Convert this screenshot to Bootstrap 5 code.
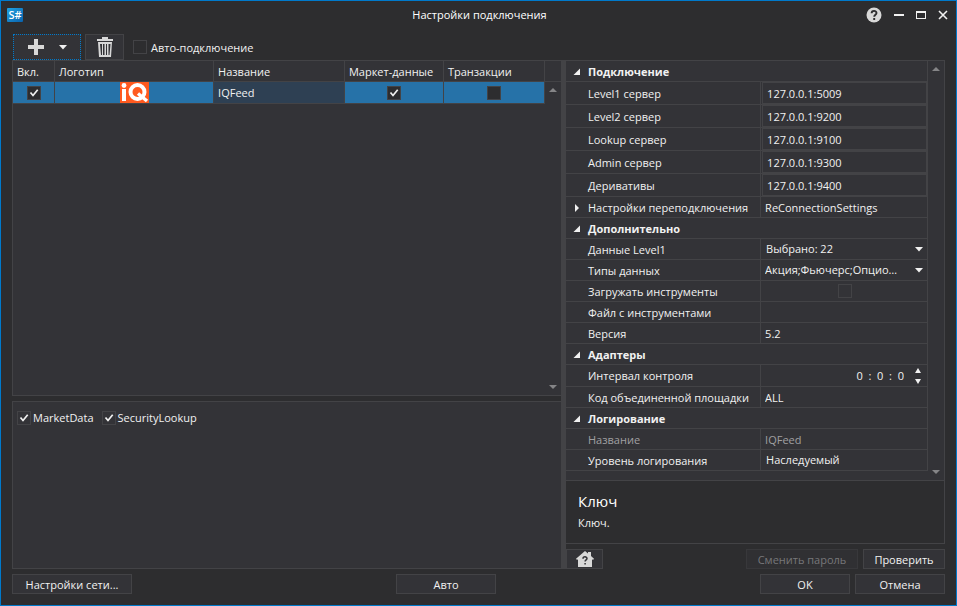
<!DOCTYPE html>
<html lang="ru" data-bs-theme="dark">
<head>
<meta charset="utf-8">
<meta name="viewport" content="width=device-width, initial-scale=1">
<title>Настройки подключения</title>
<link href="https://cdn.jsdelivr.net/npm/bootstrap@5.3.0/dist/css/bootstrap.min.css" rel="stylesheet">
<style>
:root{--win:#2d2d2f;--pane:#333337;--line:#434346;--ink:#f1f1f1;--accent:#007acc;--sel:#2672a8}
body{font-family:"Open Sans","Noto Sans",sans-serif;font-size:11px;line-height:16px;color:var(--ink);background:var(--win)}
.app-window{border:1px solid var(--accent);min-height:100vh;height:100vh}
.title-bar{height:27px;padding:0 8px 0 6px;display:grid;grid-template-columns:1fr auto 1fr}
.title-bar h1{font-size:11px;line-height:16px;font-weight:400;padding-left:4px}
.plain-btn{background:none;border:0;padding:0;color:inherit;display:flex;align-items:center;justify-content:center}
.win-btns{gap:12px}
.tool-bar{height:32px;padding:6px 12px 0;gap:4px}
.tool-btn,.cmd-btn{background:var(--pane);border:1px solid var(--line);color:var(--ink);border-radius:0;padding:0}
.tool-btn{height:26px;width:39px;display:flex;align-items:center;justify-content:center}
.add-btn{width:68px;border:1px dotted var(--accent);gap:15px}
.auto-label{gap:4px;padding-left:5px}
.auto-label span{padding-top:2px}
.cmd-btn{height:20px;line-height:16px;padding-top:2px;font-size:11px}
.cmd-btn:disabled{color:#77777a;border-color:#38383b;background:#303033}
.w-net{width:120px}.w-auto-btn{width:100px}.w-dlg{width:90px}.w-check{width:82px}.w-pass{width:112px}.w-home{width:37px;padding:0}
.tick{appearance:none;width:14px;height:14px;margin:0;border:1px solid var(--line);background:var(--win) center/12px 12px no-repeat;flex:none;display:block}
.tick-pane{background-color:var(--pane)}
.tick:checked{background-image:url("data:image/svg+xml,%3Csvg xmlns='http://www.w3.org/2000/svg' viewBox='0 0 12 12'%3E%3Cpath d='M2.500 5.500 5 8.500 9.700 2.700' fill='none' stroke='%23f1f1f1' stroke-width='1.700'/%3E%3C/svg%3E")}
.flags{gap:8px;padding:8px 4px}
.flags label{gap:2px}
.work-area{display:grid;grid-template-columns:minmax(0,549fr) 5px minmax(0,379fr);padding:0 11px}
.splitter{background:var(--line)}
.pane{background:var(--pane);border:1px solid var(--line)}
.left-col{display:grid;grid-template-rows:minmax(0,2fr) minmax(0,1fr);gap:5px}
.grid-pane{border-right:0}
table{width:100%;table-layout:fixed;border-collapse:separate;border-spacing:0}
th,td{font-weight:400;padding:1px 0 0;border-right:1px solid var(--line);border-bottom:1px solid var(--line);white-space:nowrap;overflow:hidden}
.conn-table th{height:21px;padding-left:4px}
.conn-table td{height:22px;background:var(--sel);padding:0}
.conn-table td.focused{background:#2e4053;padding-left:4px}
.conn-table td .tick{margin:0 auto}
.scroll-col{width:16px;flex:none}
.scroll-col .head{height:21px;border-bottom:1px solid var(--line);flex:none}
.prop-pane{border-left:0}
.prop-table td,.prop-table th{height:21px}
.prop-table .tall>*{height:23px}
.prop-table .mid>*{height:22px}
.prop-table th[scope=row],.prop-table .group-head{padding-left:22px}
.prop-table td{padding-left:4px}
.prop-table .edit-cell{padding:0 0 0 1px}
.group-head{font-weight:700}
.has-toggle{padding-left:6px!important}
.toggle{width:10px;height:10px;margin-right:6px}
.field{display:block;width:100%;background:var(--pane);border:0;border-radius:0;color:var(--ink);padding:0 4px;height:20px;font-size:11px;line-height:16px;appearance:none}
.boxed{border:1px solid var(--line);height:22px}
.pick{background:var(--pane) right 4px center/8px 5px no-repeat url("data:image/svg+xml,%3Csvg xmlns='http://www.w3.org/2000/svg' viewBox='0 0 8 5'%3E%3Cpath d='M0 0h8L4 4.5z' fill='%23f1f1f1'/%3E%3C/svg%3E");padding-right:24px;text-overflow:ellipsis}
.pick-plain{background-image:none}
.field-flush{padding-left:3px}
.spin{width:19px;flex:none}
.spin button{height:10px}
.spin svg{display:block}
.muted-row{color:#a0a0a2}
.muted-row .field{color:inherit}
.side-head{font-size:15px;line-height:22px;font-weight:400}
.info{border:1px solid var(--line);border-width:0 1px 1px 0;padding:9px 12px 12px;gap:3px}
.action-row{margin-top:5px}
.pair{gap:5px}
.footer-bar{padding:5px 11px 11px}
</style>
<script src="https://cdn.jsdelivr.net/npm/bootstrap@5.3.0/dist/js/bootstrap.bundle.min.js"></script>
</head>
<body>
<div class="app-window d-flex flex-column overflow-hidden">
  <header class="title-bar align-items-center">
    <svg width="16" height="16" viewBox="0 0 16 16" role="img" aria-label="S#">
      <defs><linearGradient id="lg" x1="0" y1="0" x2="1" y2="1"><stop offset="0" stop-color="#1fa3e4"/><stop offset="1" stop-color="#0a62ac"/></linearGradient></defs>
      <rect y="1" width="16" height="14" rx="1" fill="url(#lg)"/>
      <text x="8" y="12" text-anchor="middle" font-family="Open Sans,sans-serif" font-size="11" font-weight="600" fill="#fff">S#</text>
    </svg>
    <h1 class="m-0">Настройки подключения</h1>
    <div class="win-btns d-flex justify-content-end align-items-center">
      <button class="plain-btn" aria-label="Справка"><svg width="16" height="16" viewBox="0 0 16 16"><circle cx="8" cy="8" r="7.500" fill="#d8d8d8"/><path d="M5.600 6.300c0-3.200 4.900-3.100 4.900-.300 0 1.700-2.300 1.600-2.300 3.700M8.200 11v1.900" fill="none" stroke="#2d2d2f" stroke-width="1.900"/></svg></button>
      <button class="plain-btn" aria-label="Свернуть"><svg width="10" height="10"><path d="M0 4h10v2H0z" fill="#f1f1f1"/></svg></button>
      <button class="plain-btn" aria-label="Развернуть"><svg width="10" height="10"><path d="M0 1h10v8H0zM1 3v5h8V3z" fill="#f1f1f1" fill-rule="evenodd"/></svg></button>
      <button class="plain-btn" aria-label="Закрыть"><svg width="10" height="10"><path d="M1 1l8 8M9 1L1 9" stroke="#f1f1f1" stroke-width="1.600"/></svg></button>
    </div>
  </header>

  <div class="tool-bar d-flex align-items-center">
    <button class="tool-btn add-btn" aria-label="Добавить">
      <svg width="16" height="16"><path d="M6 0h4v6h6v4h-6v6H6v-6H0V6h6z" fill="#d8d8d8"/></svg>
      <svg width="8" height="5"><path d="M0 0h8L4 4.500z" fill="#f1f1f1"/></svg>
    </button>
    <button class="tool-btn" aria-label="Удалить">
      <svg width="18" height="22" viewBox="0 0 18 22" fill="#d8d8d8"><path d="M6 1h6v2h5v2H1V3h5z"/><path d="M2 6h14l-1 15H3zM4 8l1 11h1V8zM7 8v11h1.500V8zM10 8v11h1V8zM12.500 8v11h1L14.500 8z" fill-rule="evenodd"/></svg>
    </button>
    <label class="auto-label d-flex align-items-center"><input type="checkbox" class="tick"><span>Авто-подключение</span></label>
  </div>

  <main class="work-area flex-grow-1">
    <div class="left-col">
      <section class="pane grid-pane d-flex">
        <div class="flex-grow-1">
          <table class="conn-table">
            <colgroup><col style="width:7.900%"><col style="width:29.900%"><col style="width:24.600%"><col style="width:18.600%"><col style="width:19%"></colgroup>
            <thead><tr><th>Вкл.</th><th>Логотип</th><th>Название</th><th>Маркет-данные</th><th>Транзакции</th></tr></thead>
            <tbody><tr>
              <td><input type="checkbox" class="tick" checked aria-label="Вкл."></td>
              <td><svg class="d-block mx-auto" width="29" height="21" role="img" aria-label="iQ"><rect width="29" height="21" fill="#ff5a1f"/><circle cx="4" cy="3.500" r="2.400" fill="#fff"/><rect x="2" y="7" width="4" height="12" fill="#fff"/><circle cx="17.500" cy="10" r="7" fill="none" stroke="#fff" stroke-width="4"/><path d="M18 11.500l9 7.500" stroke="#fff" stroke-width="3.500"/></svg></td>
              <td class="focused">IQFeed</td>
              <td><input type="checkbox" class="tick" checked aria-label="Маркет-данные"></td>
              <td><input type="checkbox" class="tick" aria-label="Транзакции"></td>
            </tr></tbody>
          </table>
        </div>
        <div class="scroll-col d-flex flex-column align-items-stretch">
          <div class="head"></div>
          <div class="d-flex flex-column justify-content-between align-items-center flex-grow-1 py-1">
            <svg width="8" height="8"><path d="M0 6h8L4 2z" fill="#858587"/></svg>
            <svg width="8" height="8"><path d="M0 2h8L4 6z" fill="#858587"/></svg>
          </div>
        </div>
      </section>
      <section class="pane border-end-0 flags d-flex align-items-start">
        <label class="d-flex align-items-center"><input type="checkbox" class="tick tick-pane" checked>MarketData</label>
        <label class="d-flex align-items-center"><input type="checkbox" class="tick tick-pane" checked>SecurityLookup</label>
      </section>
    </div>

    <div class="splitter"></div>

    <div class="d-flex flex-column">
      <section class="pane prop-pane d-flex flex-grow-1">
        <div class="flex-grow-1">
          <table class="prop-table">
            <colgroup><col style="width:53.900%"><col></colgroup>
            <tbody>
            <tr><th colspan="2" class="group-head has-toggle"><div class="d-flex align-items-center"><button class="plain-btn toggle" aria-label="Свернуть"><svg width="10" height="10"><path d="M8 1.500V8H1.500z" fill="#f1f1f1"/></svg></button>Подключение</div></th></tr>
            <tr class="tall"><th scope="row"><label for="l1">Level1 сервер</label></th><td class="edit-cell"><input id="l1" class="field boxed" value="127.0.0.1:5009"></td></tr>
            <tr class="tall"><th scope="row"><label for="l2">Level2 сервер</label></th><td class="edit-cell"><input id="l2" class="field boxed" value="127.0.0.1:9200"></td></tr>
            <tr class="tall"><th scope="row"><label for="lk">Lookup сервер</label></th><td class="edit-cell"><input id="lk" class="field boxed" value="127.0.0.1:9100"></td></tr>
            <tr class="tall"><th scope="row"><label for="ad">Admin сервер</label></th><td class="edit-cell"><input id="ad" class="field boxed" value="127.0.0.1:9300"></td></tr>
            <tr class="tall"><th scope="row"><label for="dv">Деривативы</label></th><td class="edit-cell"><input id="dv" class="field boxed" value="127.0.0.1:9400"></td></tr>
            <tr><th scope="row" class="has-toggle"><div class="d-flex align-items-center"><button class="plain-btn toggle" aria-label="Развернуть"><svg width="10" height="10"><path d="M3 1v8l4-4z" fill="#f1f1f1"/></svg></button>Настройки переподключения</div></th><td>ReConnectionSettings</td></tr>
            <tr><th colspan="2" class="group-head has-toggle"><div class="d-flex align-items-center"><button class="plain-btn toggle" aria-label="Свернуть"><svg width="10" height="10"><path d="M8 1.500V8H1.500z" fill="#f1f1f1"/></svg></button>Дополнительно</div></th></tr>
            <tr><th scope="row"><label for="dl">Данные Level1</label></th><td class="edit-cell"><select id="dl" class="field pick"><option>Выбрано: 22</option></select></td></tr>
            <tr><th scope="row"><label for="dt">Типы данных</label></th><td class="edit-cell"><select id="dt" class="field field-flush pick"><option>Акция;Фьючерс;Опцион;Индекс;Валюта</option></select></td></tr>
            <tr><th scope="row"><label for="ld">Загружать инструменты</label></th><td class="edit-cell"><input id="ld" type="checkbox" class="tick tick-pane mx-auto"></td></tr>
            <tr><th scope="row"><label for="fl">Файл с инструментами</label></th><td class="edit-cell"><input id="fl" class="field field-flush"></td></tr>
            <tr><th scope="row"><label for="vr">Версия</label></th><td class="edit-cell"><input id="vr" class="field field-flush" value="5.2"></td></tr>
            <tr><th colspan="2" class="group-head has-toggle"><div class="d-flex align-items-center"><button class="plain-btn toggle" aria-label="Свернуть"><svg width="10" height="10"><path d="M8 1.500V8H1.500z" fill="#f1f1f1"/></svg></button>Адаптеры</div></th></tr>
            <tr class="mid"><th scope="row"><label for="iv">Интервал контроля</label></th><td class="edit-cell"><div class="d-flex"><input id="iv" class="field text-end" value="0  :  0  :  0"><div class="spin d-flex flex-column"><button class="plain-btn" aria-label="Больше"><svg width="6" height="6"><path d="M0 5h6L3 0z" fill="#f1f1f1"/></svg></button><button class="plain-btn" aria-label="Меньше"><svg width="6" height="6"><path d="M0 1h6L3 6z" fill="#f1f1f1"/></svg></button></div></div></td></tr>
            <tr><th scope="row"><label for="cd">Код объединенной площадки</label></th><td class="edit-cell"><input id="cd" class="field field-flush" value="ALL"></td></tr>
            <tr><th colspan="2" class="group-head has-toggle"><div class="d-flex align-items-center"><button class="plain-btn toggle" aria-label="Свернуть"><svg width="10" height="10"><path d="M8 1.500V8H1.500z" fill="#f1f1f1"/></svg></button>Логирование</div></th></tr>
            <tr class="muted-row"><th scope="row"><label for="nm">Название</label></th><td class="edit-cell"><input id="nm" class="field field-flush" value="IQFeed" readonly></td></tr>
            <tr><th scope="row"><label for="lv">Уровень логирования</label></th><td class="edit-cell"><select id="lv" class="field pick pick-plain"><option>Наследуемый</option></select></td></tr>
            </tbody>
          </table>
        </div>
        <div class="scroll-col d-flex flex-column justify-content-between align-items-center py-1">
          <svg width="8" height="8"><path d="M0 6h8L4 2z" fill="#858587"/></svg>
          <svg width="8" height="8"><path d="M0 2h8L4 6z" fill="#858587"/></svg>
        </div>
      </section>
      <section class="info d-flex flex-column">
        <h2 class="side-head m-0">Ключ</h2>
        <p class="m-0">Ключ.</p>
      </section>
      <div class="action-row d-flex justify-content-between">
        <button class="cmd-btn w-home d-flex justify-content-center align-items-center" aria-label="Домашняя страница"><svg width="18" height="16" viewBox="0 0 18 16"><path d="M9 0l3 2.500V1h3v4l3 2.800-1 1.200-1-.800V16H2V8.200L1 9 0 7.800z" fill="#d8d8d8"/><path d="M7 7.800c0-2.600 4-2.500 4-.200 0 1.400-1.900 1.300-1.900 3M9.100 12v1.600" fill="none" stroke="#333337" stroke-width="1.500"/></svg></button>
        <div class="pair d-flex"><button class="cmd-btn w-pass" disabled>Сменить пароль</button><button class="cmd-btn w-check">Проверить</button></div>
      </div>
    </div>
  </main>

  <footer class="footer-bar d-flex justify-content-between">
    <button class="cmd-btn w-net">Настройки сети...</button>
    <button class="cmd-btn w-auto-btn">Авто</button>
    <div class="pair d-flex"><button class="cmd-btn w-dlg">OK</button><button class="cmd-btn w-dlg">Отмена</button></div>
  </footer>
</div>
</body>
</html>
